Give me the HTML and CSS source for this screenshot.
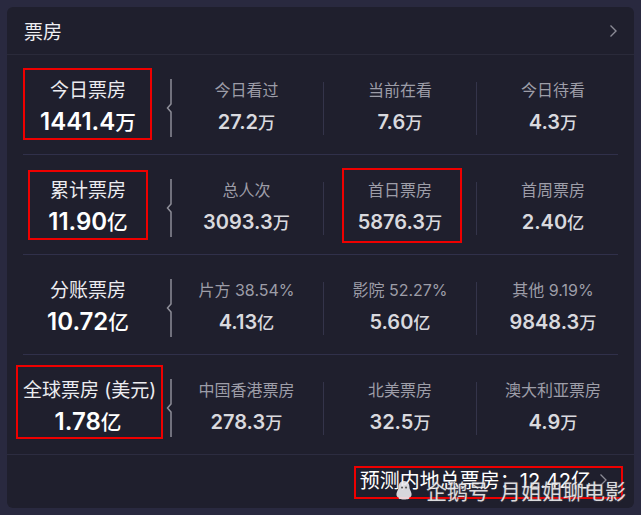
FILE: index.html
```html
<!DOCTYPE html>
<html lang="zh">
<head>
    <meta charset="UTF-8">
    <title>票房</title>
    <link rel="stylesheet" href="styles.css">
</head>
<body>
    <div class="card">
        <div class="card-head">
            <span class="title">票房</span>
            <svg class="chev" width="9" height="14" viewBox="0 0 9 14"><path d="M1.5 1.5 L7 7 L1.5 12.5" fill="none" stroke="#8b8b96" stroke-width="1.4"/></svg>
        </div>

        <div class="stat-row">
            <div class="main">
                <div class="main-label">今日票房</div>
                <div class="main-value">1441.4<span class="unit">万</span></div>
                <i class="mark mark-today"></i>
            </div>
            <div class="brace"><svg width="12" height="58" viewBox="0 0 12 58"><path d="M11 0 V25 L7.5 29 L11 33 V58" fill="none" stroke="#8e8e98" stroke-width="1.5"/></svg></div>
            <div class="sub">
                <div class="sub-label">今日看过</div>
                <div class="sub-value">27.2<span class="unit">万</span></div>
            </div>
            <div class="sub line">
                <div class="sub-label">当前在看</div>
                <div class="sub-value">7.6<span class="unit">万</span></div>
            </div>
            <div class="sub line">
                <div class="sub-label">今日待看</div>
                <div class="sub-value">4.3<span class="unit">万</span></div>
            </div>
        </div>

        <div class="stat-row">
            <div class="main">
                <div class="main-label">累计票房</div>
                <div class="main-value">11.90<span class="unit">亿</span></div>
                <i class="mark mark-total"></i>
            </div>
            <div class="brace"><svg width="12" height="58" viewBox="0 0 12 58"><path d="M11 0 V25 L7.5 29 L11 33 V58" fill="none" stroke="#8e8e98" stroke-width="1.5"/></svg></div>
            <div class="sub">
                <div class="sub-label">总人次</div>
                <div class="sub-value">3093.3<span class="unit">万</span></div>
            </div>
            <div class="sub line">
                <div class="sub-label">首日票房</div>
                <div class="sub-value">5876.3<span class="unit">万</span></div>
                <i class="mark mark-first"></i>
            </div>
            <div class="sub line">
                <div class="sub-label">首周票房</div>
                <div class="sub-value">2.40<span class="unit">亿</span></div>
            </div>
        </div>

        <div class="stat-row">
            <div class="main">
                <div class="main-label">分账票房</div>
                <div class="main-value">10.72<span class="unit">亿</span></div>
            </div>
            <div class="brace"><svg width="12" height="58" viewBox="0 0 12 58"><path d="M11 0 V25 L7.5 29 L11 33 V58" fill="none" stroke="#8e8e98" stroke-width="1.5"/></svg></div>
            <div class="sub">
                <div class="sub-label">片方 38.54%</div>
                <div class="sub-value">4.13<span class="unit">亿</span></div>
            </div>
            <div class="sub line">
                <div class="sub-label">影院 52.27%</div>
                <div class="sub-value">5.60<span class="unit">亿</span></div>
            </div>
            <div class="sub line">
                <div class="sub-label">其他 9.19%</div>
                <div class="sub-value">9848.3<span class="unit">万</span></div>
            </div>
        </div>

        <div class="stat-row last">
            <div class="main">
                <div class="main-label">全球票房 (美元)</div>
                <div class="main-value">1.78<span class="unit">亿</span></div>
                <i class="mark mark-global"></i>
            </div>
            <div class="brace"><svg width="12" height="58" viewBox="0 0 12 58"><path d="M11 0 V25 L7.5 29 L11 33 V58" fill="none" stroke="#8e8e98" stroke-width="1.5"/></svg></div>
            <div class="sub">
                <div class="sub-label">中国香港票房</div>
                <div class="sub-value">278.3<span class="unit">万</span></div>
            </div>
            <div class="sub line">
                <div class="sub-label">北美票房</div>
                <div class="sub-value">32.5<span class="unit">万</span></div>
            </div>
            <div class="sub line">
                <div class="sub-label">澳大利亚票房</div>
                <div class="sub-value">4.9<span class="unit">万</span></div>
            </div>
        </div>

        <div class="card-foot">
            <span class="forecast">预测内地总票房：12.42亿</span>
            <svg class="chev" width="9" height="14" viewBox="0 0 9 14"><path d="M1.5 1.5 L7 7 L1.5 12.5" fill="none" stroke="#8b8b96" stroke-width="1.3"/></svg>
            <i class="mark mark-foot"></i>
            <!-- 水印 -->
            <div class="watermark">
                <svg width="20" height="20" viewBox="0 0 20 20"><path d="M10 1 C6 1 4.5 4 4.5 7.5 C4.5 9.5 3 11 2.5 13.5 C2 16 3.5 17.5 5 17.8 C4 18.8 6 19.5 10 19.5 C14 19.5 16 18.8 15 17.8 C16.5 17.5 18 16 17.5 13.5 C17 11 15.5 9.5 15.5 7.5 C15.5 4 14 1 10 1 Z" fill="rgba(235,235,240,0.9)"/><path d="M8 6.5 a1 1 0 1 0 0.1 0 M12 6.5 a1 1 0 1 0 0.1 0" fill="#555"/></svg>
                <span>企鹅号 月姐姐聊电影</span>
            </div>
        </div>
    </div>
</body>
</html>
```

FILE: styles.css
```css
body {
    margin: 0;
    padding: 7px;
    background-color: #29293f;
    font-family: "Inter", "Noto Sans CJK SC", sans-serif;
    color: #ffffff;
}
.card {
    width: 627px;
    height: 501px;
    background-color: #1f1f2d;
    border-radius: 6px;
    overflow: hidden;
}
.card-head {
    height: 47px;
    border-bottom: 1px solid #2a2a3a;
    display: flex;
    align-items: center;
    justify-content: space-between;
    padding: 0 16px 0 17px;
}
.card-head .title {
    font-size: 19px;
    color: #eeeef2;
    margin-top: -1px;
}
.chev {
    display: block;
}
.stat-row {
    height: 99px;
    margin: 0 16px;
    border-bottom: 1px solid #30304a;
    display: grid;
    grid-template-columns: 130px 17px 153px 153px 153px;
    align-items: start;
}
.stat-row.last {
    margin: 0;
    padding: 0 16px;
    border-bottom-color: #2c2c40;
}
.main {
    position: relative;
    padding-top: 24px;
    text-align: center;
    white-space: nowrap;
}
.main-label {
    font-size: 19px;
    line-height: 24px;
    color: #ececf0;
}
.main-value {
    margin-top: 5px;
    font-size: 24px;
    line-height: 28px;
    font-weight: 600;
    color: #ffffff;
}
.brace {
    padding-top: 24px;
    display: flex;
    justify-content: flex-end;
}
.brace svg {
    display: block;
    margin-right: -2px;
}
.sub {
    position: relative;
    margin-top: 27px;
    text-align: center;
    white-space: nowrap;
}
.sub.line {
    border-left: 1px solid #34344a;
}
.sub-label {
    font-size: 16px;
    line-height: 16px;
    color: #9d9da8;
}
.sub-value {
    margin-top: 12px;
    font-size: 20px;
    line-height: 24px;
    font-weight: 600;
    color: #d9d9de;
}
.unit {
    font-size: 0.86em;
    font-weight: 500;
}
.card-foot {
    position: relative;
    height: 53px;
    display: flex;
    align-items: center;
    justify-content: flex-end;
    gap: 8px;
    padding-right: 26px;
}
.forecast {
    font-size: 20px;
    color: #ffffff;
    margin-top: -4px;
}
.card-foot .chev {
    margin-top: -4px;
}

/* 红框标注 */
.mark {
    position: absolute;
    border: 2px solid #ee0000;
    box-sizing: border-box;
}
.mark-today { left: 0; top: 13px; width: 129px; height: 72px; }
.mark-total { left: 5px; top: 15px; width: 120px; height: 70px; }
.mark-global { left: -7px; top: 10px; width: 147px; height: 74px; }
.mark-first { left: 18px; top: -14px; width: 120px; height: 75px; }
.mark-foot { left: 347px; top: 11px; width: 269px; height: 33px; }

.watermark {
    position: absolute;
    right: 8px;
    bottom: 3px;
    display: flex;
    align-items: center;
    gap: 12px;
    font-size: 21px;
    word-spacing: 5px;
    color: rgba(255, 255, 255, 0.82);
    text-shadow: 0 0 2px rgba(90, 90, 100, 0.9);
}
.watermark svg {
    display: block;
}
```
